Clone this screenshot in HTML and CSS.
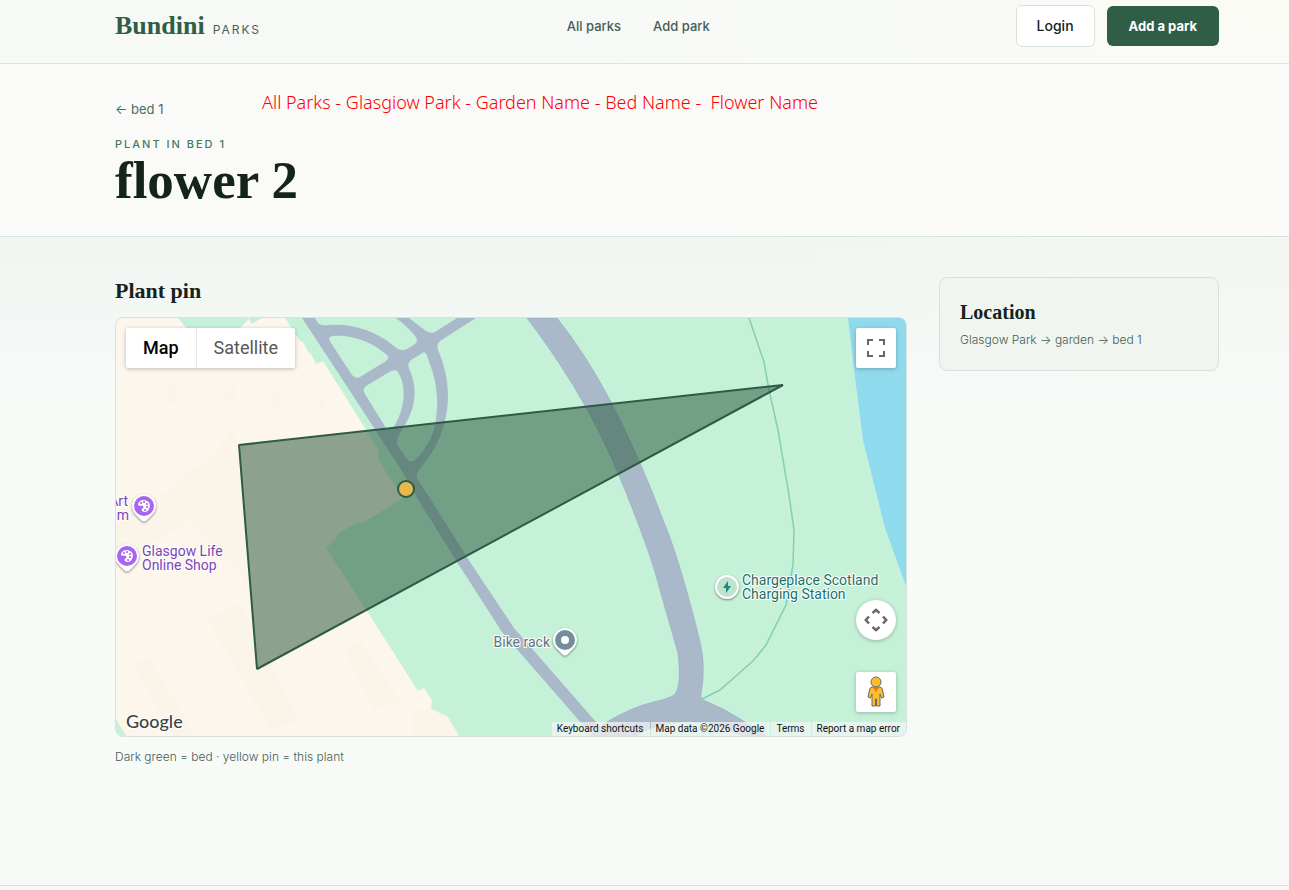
FILE: index.html
```html
<!DOCTYPE html>
<html lang="en">
<head>
<meta charset="utf-8">
<meta name="viewport" content="width=device-width, initial-scale=1">
<title>flower 2 – Bundini Parks</title>
<link rel="stylesheet" href="styles.css">
</head>
<body>
<header class="site-header">
  <a class="brand" href="#"><span class="brand-name">Bundini</span><span class="brand-tag">PARKS</span></a>
  <nav class="site-nav">
    <a href="#">All parks</a>
    <a href="#">Add park</a>
  </nav>
  <div class="actions">
    <button class="btn btn-light" type="button">Login</button>
    <button class="btn btn-dark" type="button">Add a park</button>
  </div>
</header>

<section class="hero">
  <a class="back" href="#">← bed 1</a>
  <p class="eyebrow">PLANT IN BED 1</p>
  <h1>flower 2</h1>
  <p class="note">All Parks - Glasgiow Park - Garden Name - Bed Name -&nbsp; Flower Name</p>
</section>

<main class="content">
  <section class="pin">
    <h2>Plant pin</h2>
    <div class="map">
      <svg class="map-canvas" viewBox="116 318 790 418" preserveAspectRatio="xMidYMid slice" role="img" aria-label="Map of bed 1">
        <rect x="116" y="318" width="790" height="418" fill="#c5f1d9"/>
        <path fill="#fdf6ec" d="M116 318H178L190 332H236L250 318H247L252 324L262 318H285L300 341L303 342L308 352L311 354L316 364L323 361L363 425L374 443L379 450L378 460L398 490L403 498L361 524L358 522L337 534L336 539L326 548L367 611L418 691L424 688L432 700L431 709L448 717L459 736H126L116 719Z"/>
        <g fill="#f9f4e8" opacity=".7">
          <path d="M216 452L232 427L238 445L250 585L190 520L116 565V515L168 490Z"/>
          <path d="M132 664L150 658L195 736H174Z"/>
          <path d="M208 620L240 604L300 720L270 728Z"/>
          <path d="M345 650L360 640L400 700L375 710Z"/>
          <path d="M414 709L432 709L448 717L459 736H412Z"/>
          <path d="M166 390l6-6 4 16-8 4zM224 393l9-8 4 16-10 5zM274 392l8 6-4 10-7-3zM320 400l7 3-3 8-6-2z"/>
        </g>
        <path fill="#90daee" d="M848 318L856 385L863 440L885 528L906 586V318Z"/>
        <path fill="none" stroke="#84cfae" stroke-width="1.5" d="M749 318L764 362L769 390L778 430L789 495L794 530L793 565L786 605L766 645L754 660L720 690L702 699"/>
        <path fill="#aab9ca" stroke="#9baac4" stroke-width=".7" d="M527 318Q550 348 573 385Q600 430 618 473Q650 550 660 590L678 653Q682 688 674 695Q668 699 653 702Q630 708 607 722L588 737H634Q665 716 715 724L745 737H768L745 722Q724 708 703 700Q700 698 701 694Q706 665 700 642Q680 560 663 520Q641 460 610 400Q585 353 557 318Z"/>
        <path fill="#aab9ca" fill-rule="evenodd" d="M302 318L350 391L400 468L419 501L457 562L502 632L589 732L603 730L514 628L470 562L431 500L418 480Q415 475 419 470C446 440 458 395 438 350Q436 344 440 341L476 318H457L435 332Q430 334 426 331L409 318Z
          M315 318L318 323Q321 326 328 325C350 323 375 330 394 346Q400 352 407 349L415 344Q419 341 415 336Q408 327 396 318Z
          M332 336C352 334 372 342 387 355Q390 358 386 361L360 377Q356 379 352 375L331 343Q327 337 332 336Z
          M365 394Q362 389 366 386L391 371Q396 369 398 372C406 385 406 405 395 425Q391 430 386 428Z
          M424 352Q427 353 429 362C439 385 440 415 431 438Q422 454 415 460Q411 464 407 459L397 445Q396 441 399 435C412 415 421 396 409 368Q407 364 411 360Z"/>
        <path fill="#2d5b41" fill-opacity=".54" stroke="#2d5b45" stroke-width="2" stroke-linejoin="bevel" d="M239 445L783 385L257 669Z"/>
        <circle cx="406" cy="489" r="8" fill="#e8b84b" stroke="#2d5b45" stroke-width="2"/>

        <g class="poi poi-art">
          <text x="128" y="506" text-anchor="end">Art</text>
          <text x="129" y="520" text-anchor="end">m</text>
          <text x="142" y="556">Glasgow Life</text>
          <text x="142" y="570">Online Shop</text>
        </g>
        <g class="poi poi-rack"><text x="550" y="647" text-anchor="end">Bike rack</text></g>
        <g class="poi poi-charge">
          <text x="742" y="585">Chargeplace Scotland</text>
          <text x="742" y="599">Charging Station</text>
        </g>
        <defs>
          <g id="marker">
            <path d="M0-12A12 12 0 0 1 12 0Q12 5 8 9L3 14Q0 17-3 14L-8 9Q-12 5-12 0A12 12 0 0 1 0-12Z" fill="#fff"/>
            <circle r="10" fill="currentColor"/>
          </g>
          <g id="palette">
            <path fill="#fff" d="M-6-2C-5-6 0-7 3-5C7-3 6 1 5 3C4 6 0 7-2 5C-4 3 1 2-1 0C-3-1-6 1-6-2Z"/>
            <g fill="currentColor"><circle cx="-3" cy="-3" r="1.100"/><circle cx="0" cy="-4" r="1.100"/><circle cx="3" cy="-2" r="1.100"/><circle cx="3" cy="1" r="1.100"/><circle cx="1" cy="4" r="1.100"/></g>
          </g>
        </defs>
        <g class="marker marker-art" transform="translate(144 506)"><use href="#marker"/><use href="#palette"/></g>
        <g class="marker marker-art" transform="translate(127 556)"><use href="#marker"/><use href="#palette"/></g>
        <g class="marker marker-rack" transform="translate(565 640)"><use href="#marker"/><circle r="4" fill="#fff"/></g>
        <g class="marker" transform="translate(727 587)">
          <circle r="11" fill="#bfe3d0" stroke="#fff" stroke-width="2"/>
          <path d="M1-6L-4 1H-1L-1 6L4-1H1Z" fill="#1f8a78"/>
        </g>
        <text class="logo" x="126" y="728">Google</text>
      </svg>

      <div class="map-type">
        <button type="button" class="active">Map</button>
        <button type="button">Satellite</button>
      </div>
      <button class="map-btn fullscreen" type="button" aria-label="Toggle fullscreen view">
        <svg width="18" height="18" viewBox="0 0 18 18" fill="none" stroke="#666" stroke-width="2"><path d="M1 6V1H6M12 1H17V6M17 12V17H12M6 17H1V12"/></svg>
      </button>
      <button class="map-btn camera" type="button" aria-label="Map camera controls">
        <svg width="24" height="24" viewBox="0 0 24 24" fill="none" stroke="#666" stroke-width="2.4"><path d="M8.500 5L12 1.800L15.500 5M8.500 19L12 22.200L15.500 19M5 8.500L1.800 12L5 15.500M19 8.500L22.200 12L19 15.500"/></svg>
      </button>
      <button class="map-btn pegman" type="button" aria-label="Street View">
        <svg width="18" height="32" viewBox="0 0 18 32" fill="#fbbc2d" stroke="#6d6a62" stroke-width="1"><path d="M5 11H13Q15 11 15.500 14L17 21L14.500 22L13 18V30H9.500V23H8.500V30H5V18L3.500 22L1 21L2.500 14Q3 11 5 11Z"/><path d="M5.500 11H12.500L9 16Z" fill="#e97a24" stroke="none"/><circle cx="9" cy="6" r="5"/></svg>
      </button>
      <div class="map-legal">
        <button type="button">Keyboard shortcuts</button>
        <span>Map data ©2026 Google</span>
        <a href="#">Terms</a>
        <a href="#">Report a map error</a>
      </div>
    </div>
    <p class="caption">Dark green = bed · yellow pin = this plant</p>
  </section>

  <aside class="card">
    <h2>Location</h2>
    <p>Glasgow Park → garden → bed 1</p>
  </aside>
</main>
<footer class="site-footer"></footer>
</body>
</html>
```
FILE: styles.css
```css
* { box-sizing: border-box; }

:root {
  --ink: #14231c;
  --muted: #465e53;
  --green: #2f5d46;
  --line: #d6e2dc;
  --left: 115px;
  --right: 70px;
}

body {
  margin: 0;
  min-height: 100vh;
  display: flex;
  flex-direction: column;
  background:
    radial-gradient(900px 500px at 100% 0, rgba(252, 250, 235, .7), transparent 80%),
    linear-gradient(#edf4f0 0, #edf4f0 180px, #f8faf8 400px);
  color: var(--ink);
  font-family: Inter, "Liberation Sans", sans-serif;
  font-size: 14px;
  line-height: 20px;
}

h1, h2, p { margin: 0; }
a { color: inherit; text-decoration: none; }
button { font: inherit; color: inherit; cursor: pointer; }

h1, h2, .brand-name {
  font-family: "Liberation Serif", serif;
  font-weight: 700;
}

.site-header {
  display: flex;
  align-items: center;
  justify-content: space-between;
  padding: 5px var(--right) 16px var(--left);
  border-bottom: 1px solid #dce4df;
  background: rgba(252, 252, 250, .65);
}

.brand { display: flex; align-items: baseline; gap: 8px; }
.brand-name { font-size: 26px; line-height: 32px; color: var(--green); }
.brand-tag { font-size: 12px; letter-spacing: 2px; color: var(--muted); font-weight: 400; }

.site-nav { display: flex; gap: 32px; color: var(--muted); font-weight: 500; font-size: 13px; }

.actions { display: flex; align-items: center; gap: 12px; }
.btn { height: 40px; padding: 0 22px; border: 0; border-radius: 6px; font-weight: 500; }
.btn-light { height: 42px; padding: 0 20px; background: #fff; border: 1px solid var(--line); }
.btn-dark { background: var(--green); color: #fff; font-weight: 700; font-size: 13px; }

.hero {
  position: relative;
  display: flex;
  flex-direction: column;
  align-items: flex-start;
  padding: 35px var(--right) 28px var(--left);
  border-bottom: 1px solid var(--line);
  background: rgba(252, 252, 251, .8);
}
.back { font-size: 13px; color: #45705c; }
.eyebrow { margin-top: 16px; font-size: 11px; line-height: 18px; letter-spacing: 2px; font-weight: 500; color: #457a62; }
.hero h1 { font-size: 53px; line-height: 55px; }
.note {
  position: absolute;
  left: 262px;
  top: 26px;
  color: #f00;
  font-family: "Noto Sans", sans-serif;
  font-size: 18px;
  line-height: 24px;
  font-weight: 300;
}

.content {
  flex: 1;
  display: grid;
  grid-template-columns: minmax(0, 1fr) 280px;
  gap: 32px;
  align-items: start;
  padding: 40px var(--right) 40px var(--left);
}
.content h2 { font-size: 22px; line-height: 28px; }

.map {
  position: relative;
  margin-top: 12px;
  aspect-ratio: 792 / 420;
  border: 1px solid var(--line);
  border-radius: 8px;
  overflow: hidden;
  font-family: Roboto, sans-serif;
}
.map-canvas { display: block; width: 100%; height: 100%; }
.poi text { font: 14px Roboto, sans-serif; paint-order: stroke; stroke: #fff; stroke-width: 2px; stroke-linejoin: round; }
.poi-art { fill: #7b45b5; }
.poi-rack { fill: #5b7480; }
.poi-charge { fill: #1e6f68; }
.marker { filter: drop-shadow(0 1px 1px rgba(0, 0, 0, .45)); }
.marker-art { color: #a866f0; }
.marker-rack { color: #71909c; }
.logo { font: 500 18px Lato, sans-serif; fill: #3f4246; paint-order: stroke; stroke: #fff; stroke-width: 2px; }

.map-type {
  position: absolute;
  left: 10px;
  top: 10px;
  display: flex;
  border-radius: 2px;
  background: #fff;
  box-shadow: 0 1px 4px rgba(0, 0, 0, .25);
}
.map-type button { height: 40px; padding: 0 17px; border: 0; background: none; font-size: 18px; color: #565656; }
.map-type .active { color: #000; font-weight: 500; border-right: 1px solid #e6e6e6; }

.map-btn {
  position: absolute;
  right: 10px;
  display: grid;
  place-items: center;
  width: 40px;
  height: 40px;
  padding: 0;
  border: 0;
  border-radius: 2px;
  background: #fff;
  box-shadow: 0 1px 4px rgba(0, 0, 0, .25);
}
.fullscreen { top: 10px; }
.camera { bottom: 96px; border-radius: 50%; }
.pegman { bottom: 24px; }

.map-legal {
  position: absolute;
  right: 0;
  bottom: 0;
  display: flex;
  gap: 1px;
  font-size: 10px;
  line-height: 14px;
  color: #111;
}
.map-legal > * { padding: 0 6px 0 5px; border: 0; background: rgba(245, 245, 245, .7); }

.caption { margin-top: 10px; font-size: 12px; font-weight: 300; color: var(--muted); }

.card {
  padding: 20px;
  border: 1px solid var(--line);
  border-radius: 8px;
  background: #f0f5f0;
}
.card h2 { font-size: 20px; }
.card p { margin-top: 4px; font-size: 12px; font-weight: 300; color: var(--muted); }

.site-footer { height: 5px; border-top: 1px solid var(--line); }
```
